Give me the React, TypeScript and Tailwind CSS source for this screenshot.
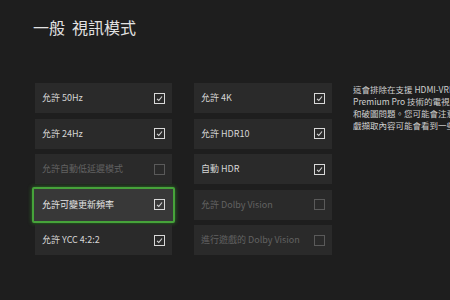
const FONT = '"Noto Sans CJK TC", "Noto Sans", sans-serif';

type Item = { label: string; checked: boolean; disabled?: boolean; focused?: boolean };

const left: Item[] = [
  { label: '允許 50Hz', checked: true },
  { label: '允許 24Hz', checked: true },
  { label: '允許自動低延遲模式', checked: false, disabled: true },
  { label: '允許可變更新頻率', checked: true, focused: true },
  { label: '允許 YCC 4:2:2', checked: true },
];

const right: Item[] = [
  { label: '允許 4K', checked: true },
  { label: '允許 HDR10', checked: true },
  { label: '自動 HDR', checked: true },
  { label: '允許 Dolby Vision', checked: false, disabled: true },
  { label: '進行遊戲的 Dolby Vision', checked: false, disabled: true },
];

function Box({ checked, disabled }: { checked: boolean; disabled?: boolean }) {
  const c = disabled ? '#5a5a5a' : '#d8d8d8';
  return (
    <svg width="11" height="11" viewBox="0 0 11 11" className="shrink-0">
      <rect x="0.5" y="0.5" width="10" height="10" fill="none" stroke={c} strokeWidth="1" />
      {checked && <polyline points="3,5.8 4.8,7.5 8,3.5" fill="none" stroke={c} strokeWidth="1.1" />}
    </svg>
  );
}

function Tile({ item }: { item: Item }) {
  if (item.focused) {
    return (
      <div className="h-[36px] -mx-[3px] -my-[3px] flex items-center justify-between pl-[8px] pr-[8px] bg-[#383838] border-2 border-[#46a33a] rounded-[2px] shadow-[0_0_4px_#2f7d27]">
        <span className="text-[9px] text-[#e4e4e4]">{item.label}</span>
        <Box checked={item.checked} />
      </div>
    );
  }
  return (
    <div className="h-[30px] flex items-center justify-between pl-[7px] pr-[7px] bg-[#2a2a2a]">
      <span className={`text-[9px] ${item.disabled ? 'text-[#626262]' : 'text-[#d6d6d6]'}`}>{item.label}</span>
      <Box checked={item.checked} disabled={item.disabled} />
    </div>
  );
}

export default function App() {
  return (
    <div className="w-[450px] h-[300px] overflow-hidden bg-[#1e1e1e]" style={{ fontFamily: FONT }}>
      <div className="pt-[16px] pl-[33px] text-[16px] leading-[22px] text-[#e2e2e2] whitespace-nowrap">
        一般<span className="ml-[7px]">視訊模式</span>
      </div>
      <div className="flex mt-[45px] pl-[35px]">
        <div className="w-[137px] shrink-0 flex flex-col gap-[5.5px]">
          {left.map((it) => (
            <Tile key={it.label} item={it} />
          ))}
        </div>
        <div className="w-[138px] shrink-0 ml-[22px] flex flex-col gap-[5.5px]">
          {right.map((it) => (
            <Tile key={it.label} item={it} />
          ))}
        </div>
        <div className="ml-[21px] w-[97px] shrink-0 overflow-hidden text-[8.5px] leading-[12px] text-[#cfcfcf] whitespace-nowrap">
          <p>這會排除在支援 HDMI-VRR</p>
          <p>Premium Pro 技術的電視上</p>
          <p>和破圖問題。您可能會注意</p>
          <p>戲擷取內容可能會看到一些</p>
        </div>
      </div>
    </div>
  );
}
